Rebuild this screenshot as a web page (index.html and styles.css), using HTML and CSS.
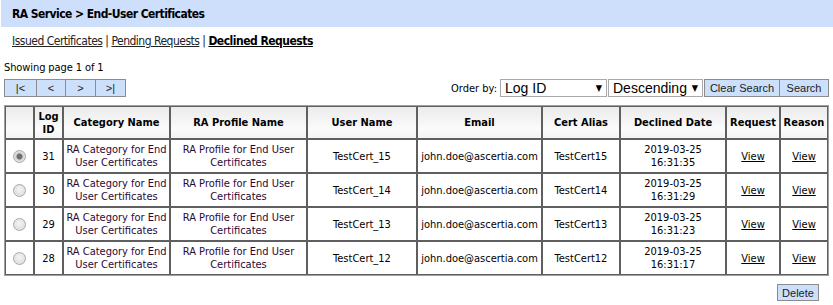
FILE: index.html
```html
<!DOCTYPE html>
<html lang="en">
<head>
  <meta charset="UTF-8" />
  <title>Declined Requests</title>
  <link rel="stylesheet" href="styles.css">
</head>
<body>
  <div class="titleBar">RA Service &gt; End-User Certificates</div>

  <div class="tabs">
    <a href="#">Issued Certificates</a> |
    <a href="#">Pending Requests</a> |
    <a href="#" class="current">Declined Requests</a>
  </div>

  <div class="pageInfo">Showing page 1 of 1</div>

  <div class="toolbar">
    <div class="pager">
      <button class="btn pagerBtn w1">|&lt;</button><button class="btn pagerBtn w2">&lt;</button><button class="btn pagerBtn w3">&gt;</button><button class="btn pagerBtn w4">&gt;|</button>
    </div>
    <div class="orderBy">
      <label for="orderField">Order by:</label>
      <span class="selectWrap fieldSel">
        <select id="orderField">
          <option>Log ID</option>
          <option>Category Name</option>
          <option>User Name</option>
        </select>
      </span>
      <span class="selectWrap dirSel">
        <select id="orderDir">
          <option>Descending</option>
          <option>Ascending</option>
        </select>
      </span>
      <button class="btn clearBtn">Clear Search</button><button class="btn searchBtn">Search</button>
    </div>
  </div>

  <table class="grid">
    <thead>
      <tr>
        <th class="c1"></th>
        <th class="c2">Log ID</th>
        <th class="c3">Category Name</th>
        <th class="c4">RA Profile Name</th>
        <th class="c5">User Name</th>
        <th class="c6">Email</th>
        <th class="c7">Cert Alias</th>
        <th class="c8">Declined Date</th>
        <th class="c9">Request</th>
        <th class="c10">Reason</th>
      </tr>
    </thead>
    <tbody>
      <tr>
        <td><input type="radio" name="sel" checked></td>
        <td>31</td>
        <td class="purple">RA Category for End User Certificates</td>
        <td class="purple">RA Profile for End User Certificates</td>
        <td>TestCert_15</td>
        <td>john.doe@ascertia.com</td>
        <td>TestCert15</td>
        <td>2019-03-25<br>16:31:35</td>
        <td><a href="#">View</a></td>
        <td><a href="#">View</a></td>
      </tr>
      <tr>
        <td><input type="radio" name="sel"></td>
        <td>30</td>
        <td class="purple">RA Category for End User Certificates</td>
        <td class="purple">RA Profile for End User Certificates</td>
        <td>TestCert_14</td>
        <td>john.doe@ascertia.com</td>
        <td>TestCert14</td>
        <td>2019-03-25<br>16:31:29</td>
        <td><a href="#">View</a></td>
        <td><a href="#">View</a></td>
      </tr>
      <tr>
        <td><input type="radio" name="sel"></td>
        <td>29</td>
        <td class="purple">RA Category for End User Certificates</td>
        <td class="purple">RA Profile for End User Certificates</td>
        <td>TestCert_13</td>
        <td>john.doe@ascertia.com</td>
        <td>TestCert13</td>
        <td>2019-03-25<br>16:31:23</td>
        <td><a href="#">View</a></td>
        <td><a href="#">View</a></td>
      </tr>
      <tr>
        <td><input type="radio" name="sel"></td>
        <td>28</td>
        <td class="purple">RA Category for End User Certificates</td>
        <td class="purple">RA Profile for End User Certificates</td>
        <td>TestCert_12</td>
        <td>john.doe@ascertia.com</td>
        <td>TestCert12</td>
        <td>2019-03-25<br>16:31:17</td>
        <td><a href="#">View</a></td>
        <td><a href="#">View</a></td>
      </tr>
    </tbody>
  </table>

  <div class="footer">
    <button class="btn deleteBtn">Delete</button>
  </div>
</body>
</html>
```

FILE: styles.css
```css
html, body {
  margin: 0;
  padding: 0;
  background: #fff;
  font-family: "DejaVu Sans Condensed", "DejaVu Sans", sans-serif;
  font-size: 11px;
  color: #000;
}

.titleBar {
  margin-left: 1px;
  height: 27px;
  line-height: 28px;
  padding-left: 11px;
  background: #cddffa;
  font-weight: bold;
  font-size: 12px;
  letter-spacing: -0.55px;
}

.tabs {
  padding: 6px 0 0 12px;
  height: 16px;
  line-height: 16px;
  font-size: 12px;
  letter-spacing: -0.5px;
  color: #222;
}

.tabs a {
  color: #222;
  text-decoration: underline;
}

.tabs a.current {
  color: #000;
  font-weight: bold;
}

.pageInfo {
  padding: 12px 0 0 4px;
  height: 14px;
  line-height: 14px;
  letter-spacing: -0.1px;
}

.toolbar {
  display: flex;
  justify-content: space-between;
  align-items: center;
  padding: 0 4px;
  margin-top: 4px;
  height: 18px;
}

.btn {
  font-family: "Liberation Sans", Arial, sans-serif;
  font-size: 11px;
  color: #222;
  background: #cce0fb;
  border: 1px solid #8c8c8c;
  height: 18px;
  padding: 0;
  margin: 0;
  box-sizing: border-box;
  cursor: pointer;
}

.pager {
  display: flex;
}

.pagerBtn { margin-right: -1px; }
.w1 { width: 33px; }
.w2 { width: 30px; }
.w3 { width: 31px; }
.w4 { width: 31px; }

.orderBy {
  display: flex;
  align-items: center;
}

.orderBy label {
  margin-right: 3px;
}

.selectWrap {
  position: relative;
  display: inline-block;
  margin-right: 1px;
}

.selectWrap select {
  appearance: none;
  -webkit-appearance: none;
  height: 18px;
  box-sizing: border-box;
  border: 1px solid #a9a9a9;
  background: #fff;
  font-family: "Liberation Sans", Arial, sans-serif;
  font-size: 14px;
  line-height: 16px;
  padding: 0 0 0 4px;
  margin: 0;
  color: #000;
  border-radius: 0;
}

.selectWrap::after {
  content: "\25BC";
  position: absolute;
  right: 5px;
  top: 3px;
  font-size: 9px;
  line-height: 12px;
  pointer-events: none;
}

.fieldSel select { width: 107px; }
.dirSel select { width: 95px; }

.clearBtn { width: 76px; margin-right: -1px; }
.searchBtn { width: 50px; }

.grid {
  margin: 8px 0 0 4px;
  width: 825px;
  table-layout: fixed;
  border-collapse: separate;
  border-spacing: 0;
  border: 1px solid #a0a0a0;
  box-sizing: border-box;
}

.grid th, .grid td {
  box-sizing: border-box;
  border: 1px solid #5f5f5f;
  text-align: center;
  vertical-align: middle;
  padding: 0 2px;
  line-height: 13px;
}

.grid th {
  height: 33px;
  font-weight: bold;
  background: linear-gradient(#ebebeb, #fbfbfb 70%, #f4f4f4);
}

.grid td {
  height: 34px;
}

.c1 { width: 29px; }
.c2 { width: 29px; }
.c3 { width: 107px; }
.c4 { width: 137px; }
.c5 { width: 110px; }
.c6 { width: 125px; }
.c7 { width: 78px; }
.c8 { width: 106px; }
.c9 { width: 54px; }
.c10 { width: 48px; }

.grid td.purple {
  color: #2b0838;
}

.grid a {
  color: #000;
  text-decoration: underline;
}

.grid input[type="radio"] {
  appearance: none;
  -webkit-appearance: none;
  width: 13px;
  height: 13px;
  margin: 0;
  border: 1px solid #a8a8a8;
  border-radius: 50%;
  background: radial-gradient(circle at 50% 40%, #f4f4f4, #d8d8d8);
  vertical-align: middle;
  position: relative;
}

.grid input[type="radio"]:checked {
  background: radial-gradient(circle, #6f6f6f 0, #6f6f6f 2.5px, #d4d4d4 3.5px, #e6e6e6 6px);
}

.footer {
  display: flex;
  justify-content: flex-end;
  padding: 8px 14px 0 0;
}

.deleteBtn {
  width: 42px;
  height: 17px;
}
```
